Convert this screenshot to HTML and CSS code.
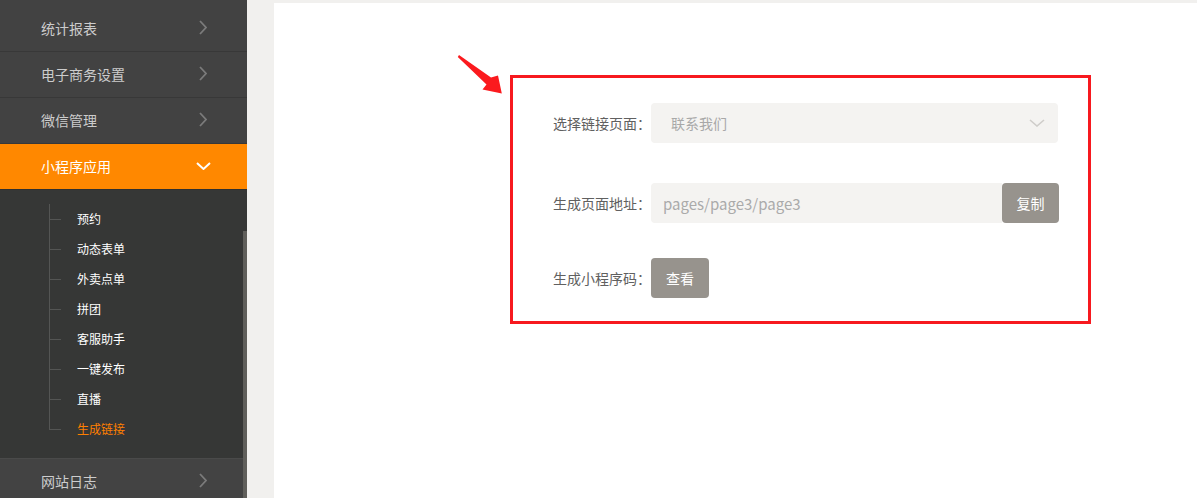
FILE: index.html
```html
<!DOCTYPE html>
<html lang="zh-CN">
<head>
<meta charset="utf-8">
<title>生成链接</title>
<link rel="stylesheet" href="styles.css">
</head>
<body>
<aside class="sidebar">
  <ul class="nav">
    <li class="nav-item"><span>统计报表</span><svg class="chev" viewBox="0 0 8 15"><path d="M1 1 L7 7.5 L1 14"/></svg></li>
    <li class="nav-item"><span>电子商务设置</span><svg class="chev" viewBox="0 0 8 15"><path d="M1 1 L7 7.5 L1 14"/></svg></li>
    <li class="nav-item"><span>微信管理</span><svg class="chev" viewBox="0 0 8 15"><path d="M1 1 L7 7.5 L1 14"/></svg></li>
    <li class="nav-item open"><span>小程序应用</span><svg class="chev-down" viewBox="0 0 15 8"><path d="M1 1 L7.5 7 L14 1"/></svg></li>
    <li class="sub">
      <ul class="sub-list">
        <li class="sub-item">预约</li>
        <li class="sub-item">动态表单</li>
        <li class="sub-item">外卖点单</li>
        <li class="sub-item">拼团</li>
        <li class="sub-item">客服助手</li>
        <li class="sub-item">一键发布</li>
        <li class="sub-item">直播</li>
        <li class="sub-item active">生成链接</li>
      </ul>
    </li>
    <li class="nav-item last"><span>网站日志</span><svg class="chev" viewBox="0 0 8 15"><path d="M1 1 L7 7.5 L1 14"/></svg></li>
  </ul>
  <div class="scroll-thumb"></div>
</aside>
<main class="main">
  <div class="panel">
    <div class="form-box">
      <div class="row row-1">
        <label class="label">选择链接页面：</label>
        <div class="select">
          <span>联系我们</span>
          <svg class="select-arrow" viewBox="0 0 16 8"><path d="M1 1 L8 7 L15 1"/></svg>
        </div>
      </div>
      <div class="row row-2">
        <label class="label">生成页面地址：</label>
        <div class="input">pages/page3/page3</div>
        <button class="btn btn-copy">复制</button>
      </div>
      <div class="row row-3">
        <label class="label">生成小程序码：</label>
        <button class="btn btn-view">查看</button>
      </div>
    </div>
  </div>
</main>
<svg class="annot-arrow" viewBox="455 50 50 46">
  <polygon points="459,55 491,77.5 498,75.5 501.8,93.5 482.5,89.5 486.5,84.5 457.8,57"/>
</svg>
</body>
</html>
```
FILE: styles.css
```css
* { box-sizing: border-box; }
html, body { margin: 0; padding: 0; }
body {
  width: 1197px;
  height: 498px;
  overflow: hidden;
  display: flex;
  background: #f1f0ee;
  font-family: "Noto Sans CJK SC", "Microsoft YaHei", sans-serif;
  position: relative;
}
ul { list-style: none; margin: 0; padding: 0; }

.sidebar {
  width: 247px;
  flex: none;
  background: #424242;
  padding-top: 6px;
  position: relative;
  height: 498px;
}
.nav-item {
  height: 46px;
  border-bottom: 1px solid #383838;
  display: flex;
  align-items: center;
  justify-content: space-between;
  padding: 0 40px 2px 41px;
  font-size: 14px;
  color: #cccccc;
}
.chev {
  width: 8px;
  height: 15px;
  fill: none;
  stroke: #7b7b7b;
  stroke-width: 1.8;
}
.nav-item.open {
  background: #ff8800;
  color: #ffffff;
  border-bottom-color: #2f302f;
  padding-right: 36px;
}
.chev-down {
  width: 15px;
  height: 8px;
  fill: none;
  stroke: #ffffff;
  stroke-width: 2;
}
.sub {
  background: #363736;
  padding: 14px 0 14px 49px;
  height: 268px;
}
.sub-item {
  height: 30px;
  line-height: 30px;
  padding-left: 28px;
  font-size: 12px;
  color: #ffffff;
  position: relative;
}
.sub-item::before {
  content: "";
  position: absolute;
  left: 0;
  top: 15px;
  width: 12px;
  height: 1px;
  background: #545554;
}
.sub-item::after {
  content: "";
  position: absolute;
  left: 0;
  top: 0;
  width: 1px;
  height: 30px;
  background: #545554;
}
.sub-item.active::after { height: 16px; }
.sub-item.active { color: #ff7f00; }
.nav-item.last {
  border-top: 1px solid #4a4a4a;
  border-bottom: none;
  background: #434343;
}
.scroll-thumb {
  position: absolute;
  right: 0;
  top: 231px;
  bottom: 0;
  width: 4px;
  background: #605f5b;
}

.main {
  flex: 1;
  padding: 3px 0 0 27px;
}
.panel {
  background: #ffffff;
  height: 100%;
  padding: 72px 0 0 236px;
}
.form-box {
  width: 581px;
  border: 3px solid #f7191f;
  padding: 25px 29px 23px 0;
}
.row {
  display: flex;
  align-items: center;
  height: 40px;
}
.row-1 { margin-bottom: 40px; }
.row-2 { margin-bottom: 35px; }
.label {
  width: 138px;
  flex: none;
  text-align: right;
  font-size: 14px;
  color: #606060;
}
.select {
  width: 407px;
  height: 40px;
  background: #f4f3f1;
  border-radius: 4px;
  display: flex;
  align-items: center;
  justify-content: space-between;
  padding: 0 13px 0 20px;
  font-size: 14px;
  color: #a8a8a8;
}
.select-arrow {
  width: 16px;
  height: 8px;
  fill: none;
  stroke: #cfcdca;
  stroke-width: 1.6;
}
.input {
  width: 351px;
  height: 40px;
  background: #f4f3f1;
  border-radius: 4px 0 0 4px;
  display: flex;
  align-items: center;
  padding-left: 12px;
  font-size: 15px;
  color: #aaaaaa;
}
.btn {
  height: 40px;
  border: none;
  border-radius: 4px;
  background: #97938d;
  color: #ffffff;
  font-family: inherit;
  font-size: 14px;
  padding: 0;
  flex: none;
}
.btn-copy { width: 57px; }
.btn-view { width: 58px; }

.annot-arrow {
  position: absolute;
  left: 455px;
  top: 50px;
  width: 50px;
  height: 46px;
  fill: #fb1a1e;
}
```
